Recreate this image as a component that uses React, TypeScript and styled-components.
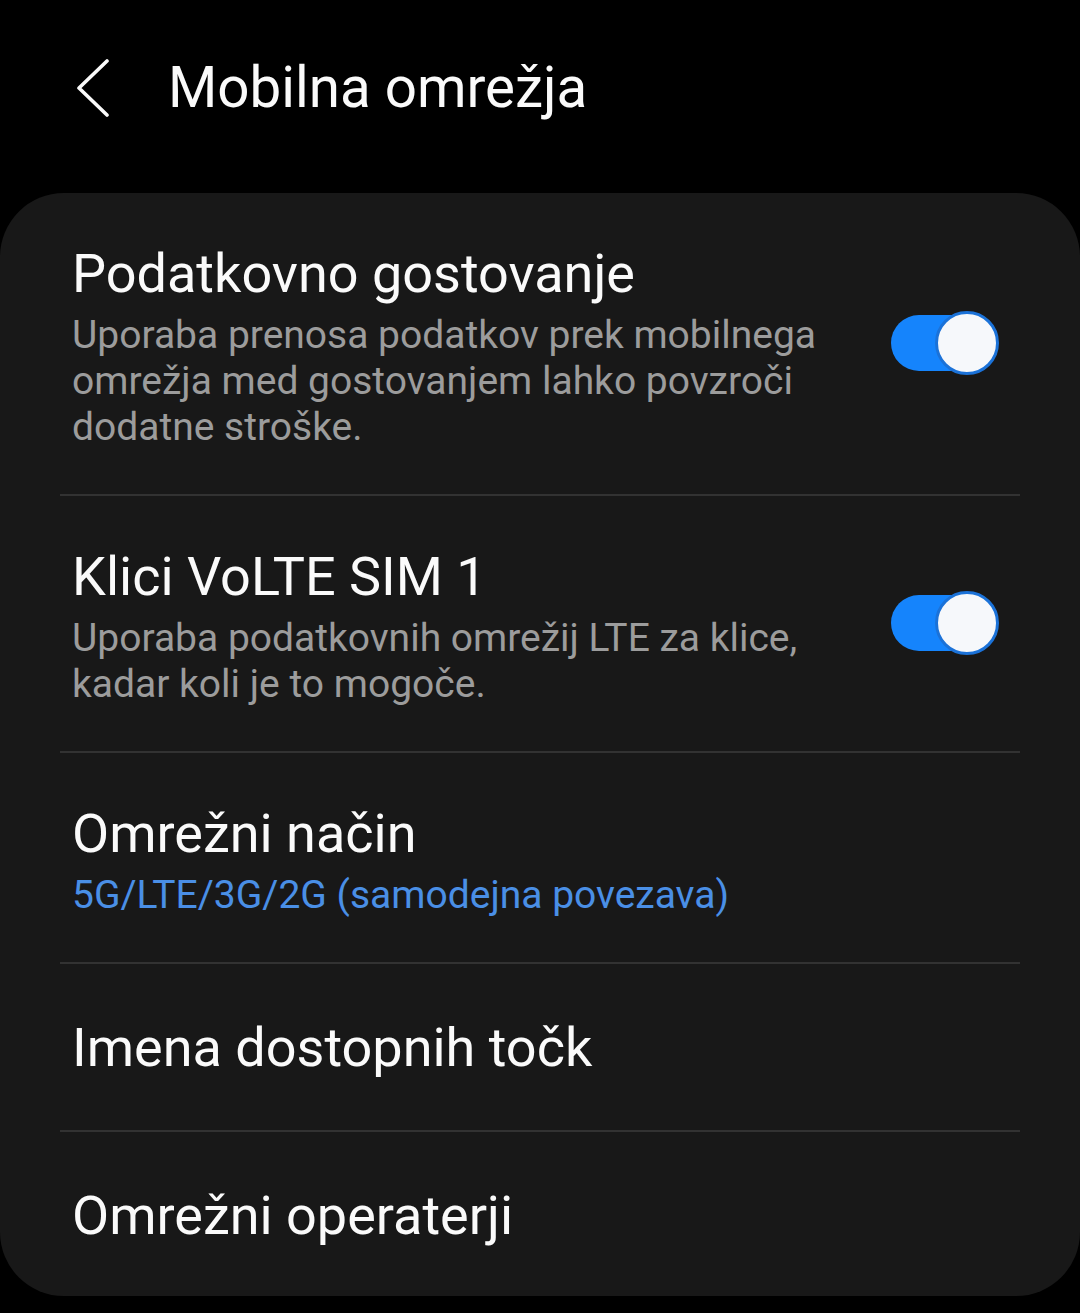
import styled, { createGlobalStyle } from 'styled-components';

const GlobalStyle = createGlobalStyle`
  html, body {
    margin: 0;
    padding: 0;
    background: #000;
  }
  body {
    font-family: Roboto, "Noto Sans", "Liberation Sans", sans-serif;
    color: #fafafa;
    -webkit-font-smoothing: antialiased;
  }
`;

interface SettingItem {
  title: string;
  summary?: string;
  accent?: boolean;
  toggle?: boolean;
}

const items: SettingItem[] = [
  {
    title: 'Podatkovno gostovanje',
    summary:
      'Uporaba prenosa podatkov prek mobilnega omrežja med gostovanjem lahko povzroči dodatne stroške.',
    toggle: true,
  },
  {
    title: 'Klici VoLTE SIM 1',
    summary: 'Uporaba podatkovnih omrežij LTE za klice, kadar koli je to mogoče.',
    toggle: true,
  },
  {
    title: 'Omrežni način',
    summary: '5G/LTE/3G/2G (samodejna povezava)',
    accent: true,
  },
  { title: 'Imena dostopnih točk' },
  { title: 'Omrežni operaterji' },
];

export default function App() {
  return (
    <>
      <GlobalStyle />
      <Screen>
        <Header>
          <BackButton aria-label="Nazaj">
            <svg width="34" height="58" viewBox="0 0 34 58" fill="none">
              <polyline
                points="31,2 3,29 31,56"
                stroke="#fafafa"
                strokeWidth="3.6"
                strokeLinecap="round"
                strokeLinejoin="round"
              />
            </svg>
          </BackButton>
          <HeaderTitle>Mobilna omrežja</HeaderTitle>
        </Header>
        <Card>
          {items.map((item, i) => (
            <Row key={item.title} $single={!item.summary} $last={i === items.length - 1}>
              <TextCol>
                <Title>{item.title}</Title>
                {item.summary && <Summary $accent={item.accent}>{item.summary}</Summary>}
              </TextCol>
              {item.toggle && (
                <Toggle role="switch" aria-checked="true">
                  <Track />
                  <Knob />
                </Toggle>
              )}
            </Row>
          ))}
        </Card>
      </Screen>
    </>
  );
}

const Screen = styled.div`
  width: 1080px;
  min-height: 1313px;
  background: #000;
`;

const Header = styled.header`
  height: 176px;
  margin-bottom: 17px;
  display: flex;
  align-items: center;
  padding-left: 76px;
  box-sizing: border-box;
`;

const BackButton = styled.button`
  background: none;
  border: none;
  padding: 0;
  margin: 0 58px 0 0;
  display: flex;
  align-items: center;
  cursor: pointer;
`;

const HeaderTitle = styled.h1`
  margin: 0;
  font-size: 56.5px;
  line-height: 66px;
  font-weight: 400;
  color: #fafafa;
`;

const Card = styled.section`
  background: #181818;
  border-radius: 64px;
  padding: 0 60px;
`;

const Row = styled.div<{ $single?: boolean; $last?: boolean }>`
  display: flex;
  align-items: center;
  padding: ${({ $single, $last }) =>
    $single ? `53px 21px ${$last ? 49 : 51}px 12px` : '50px 21px 44px 12px'};
  border-bottom: ${({ $last }) => ($last ? 'none' : '2px solid #323232')};
`;

const TextCol = styled.div`
  flex: 0 0 790px;
  display: flex;
  flex-direction: column;
  gap: 7px;
`;

const Title = styled.div`
  font-size: 54px;
  line-height: 62px;
  color: #fafafa;
`;

const Summary = styled.div<{ $accent?: boolean }>`
  font-size: 39px;
  line-height: 46px;
  color: ${({ $accent }) => ($accent ? '#4a8fe6' : '#9c9c9c')};
`;

const Toggle = styled.div`
  position: relative;
  margin-left: auto;
  margin-bottom: 7px;
  width: 108px;
  height: 64px;
  flex-shrink: 0;
`;

const Track = styled.span`
  position: absolute;
  left: 0;
  top: 4px;
  width: 100px;
  height: 56px;
  border-radius: 28px;
  background: #1584fc;
`;

const Knob = styled.span`
  position: absolute;
  right: 0;
  top: 0;
  width: 64px;
  height: 64px;
  box-sizing: border-box;
  border-radius: 50%;
  border: 3px solid #1b72d8;
  background: #f6f8fb;
`;
